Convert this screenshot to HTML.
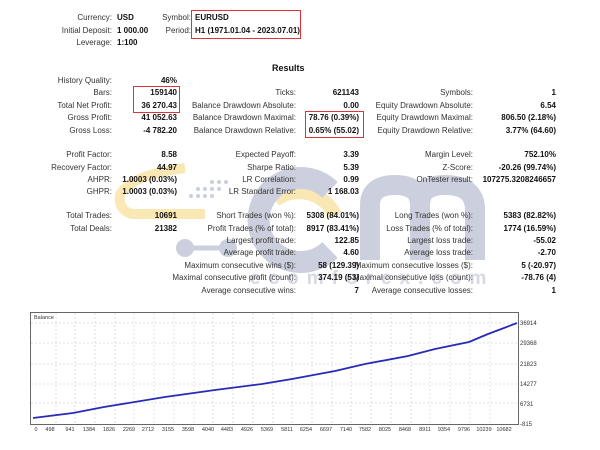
<!DOCTYPE html>
<html><head><meta charset="utf-8"><style>
body{margin:0;width:600px;height:450px;background:#fff;position:relative;overflow:hidden;font-family:"Liberation Sans",Tahoma,sans-serif;font-size:8px;color:#222}
.l,.v,.t{position:absolute;white-space:nowrap;line-height:10px}
.l{text-align:right;color:#333}
.v{text-align:right;font-weight:bold;color:#111}
.t{font-weight:bold;color:#111}
.box{position:absolute;border:1.5px solid #e0323a}
svg{position:absolute;left:0;top:0}
</style></head><body>
<svg width="600" height="450" style="z-index:0">
 <g opacity="0.5">
  <path d="M185 168 Q130 175 120 195 Q118 210 132 214 L205 214" fill="none" stroke="#f7d26b" stroke-width="10"/>
  <path d="M275 200 A40 40 0 0 1 335 215" fill="none" stroke="#f7d26b" stroke-width="14"/>
  <path d="M330 190 A42 42 0 1 0 330 250" fill="none" stroke="#9aa0bc" stroke-width="22"/>
  <path d="M370 260 L370 205 Q370 185 395 185 Q420 185 420 205 L420 260 M420 205 Q420 185 445 185 Q475 185 475 210 L475 260" fill="none" stroke="#9aa0bc" stroke-width="20"/>
  <line x1="185" y1="248" x2="228" y2="248" stroke="#9aa0bc" stroke-width="5"/>
  <circle cx="185" cy="248" r="9" fill="#9aa0bc"/><circle cx="228" cy="248" r="9" fill="#9aa0bc"/>
  <g fill="#9aa0bc"><circle cx="212" cy="182" r="2"/><circle cx="219" cy="182" r="2"/><circle cx="226" cy="182" r="2"/><circle cx="198" cy="189" r="2"/><circle cx="205" cy="189" r="2"/><circle cx="212" cy="189" r="2"/><circle cx="219" cy="189" r="2"/><circle cx="191" cy="196" r="2"/><circle cx="198" cy="196" r="2"/><circle cx="205" cy="196" r="2"/><circle cx="212" cy="196" r="2"/></g>
  <text x="250" y="284" font-family="Liberation Sans" font-size="19" font-weight="bold" fill="#9aa0bc" opacity="0.8" letter-spacing="8">ecomforex.com</text>
 </g>
</svg>
<div style="position:relative;z-index:1">
<div class="l" style="right:488px;top:13px">Currency:</div><div class="t" style="left:117px;top:13px">USD</div>
<div class="l" style="right:488px;top:26px">Initial Deposit:</div><div class="t" style="left:117px;top:26px">1 000.00</div>
<div class="l" style="right:488px;top:38px">Leverage:</div><div class="t" style="left:117px;top:38px">1:100</div>
<div class="l" style="right:409px;top:13px">Symbol:</div><div class="t" style="left:195px;top:13px">EURUSD</div>
<div class="l" style="right:409px;top:26px">Period:</div><div class="t" style="left:195px;top:26px">H1 (1971.01.04 - 2023.07.01)</div>
<div class="t" style="left:272px;top:63px;font-size:9px">Results</div>

<div class="l" style="right:488px;top:76px">History Quality:</div><div class="v" style="right:423px;top:76px">46%</div>
<div class="l" style="right:488px;top:88px">Bars:</div><div class="v" style="right:423px;top:88px">159140</div>
<div class="l" style="right:488px;top:101px">Total Net Profit:</div><div class="v" style="right:423px;top:101px">36 270.43</div>
<div class="l" style="right:488px;top:113px">Gross Profit:</div><div class="v" style="right:423px;top:113px">41 052.63</div>
<div class="l" style="right:488px;top:126px">Gross Loss:</div><div class="v" style="right:423px;top:126px">-4 782.20</div>

<div class="l" style="right:304px;top:88px">Ticks:</div><div class="v" style="right:241px;top:88px">621143</div>
<div class="l" style="right:304px;top:101px">Balance Drawdown Absolute:</div><div class="v" style="right:241px;top:101px">0.00</div>
<div class="l" style="right:304px;top:113px">Balance Drawdown Maximal:</div><div class="v" style="right:241px;top:113px">78.76 (0.39%)</div>
<div class="l" style="right:304px;top:126px">Balance Drawdown Relative:</div><div class="v" style="right:241px;top:126px">0.65% (55.02)</div>

<div class="l" style="right:127px;top:88px">Symbols:</div><div class="v" style="right:44px;top:88px">1</div>
<div class="l" style="right:127px;top:101px">Equity Drawdown Absolute:</div><div class="v" style="right:44px;top:101px">6.54</div>
<div class="l" style="right:127px;top:113px">Equity Drawdown Maximal:</div><div class="v" style="right:44px;top:113px">806.50 (2.18%)</div>
<div class="l" style="right:127px;top:126px">Equity Drawdown Relative:</div><div class="v" style="right:44px;top:126px">3.77% (64.60)</div>

<div class="l" style="right:488px;top:150px">Profit Factor:</div><div class="v" style="right:423px;top:150px">8.58</div>
<div class="l" style="right:488px;top:163px">Recovery Factor:</div><div class="v" style="right:423px;top:163px">44.97</div>
<div class="l" style="right:488px;top:175px">AHPR:</div><div class="v" style="right:423px;top:175px">1.0003 (0.03%)</div>
<div class="l" style="right:488px;top:187px">GHPR:</div><div class="v" style="right:423px;top:187px">1.0003 (0.03%)</div>
<div class="l" style="right:304px;top:150px">Expected Payoff:</div><div class="v" style="right:241px;top:150px">3.39</div>
<div class="l" style="right:304px;top:163px">Sharpe Ratio:</div><div class="v" style="right:241px;top:163px">5.39</div>
<div class="l" style="right:304px;top:175px">LR Correlation:</div><div class="v" style="right:241px;top:175px">0.99</div>
<div class="l" style="right:304px;top:187px">LR Standard Error:</div><div class="v" style="right:241px;top:187px">1 168.03</div>
<div class="l" style="right:127px;top:150px">Margin Level:</div><div class="v" style="right:44px;top:150px">752.10%</div>
<div class="l" style="right:127px;top:163px">Z-Score:</div><div class="v" style="right:44px;top:163px">-20.26 (99.74%)</div>
<div class="l" style="right:127px;top:175px">OnTester result:</div><div class="v" style="right:44px;top:175px">107275.3208246657</div>

<div class="l" style="right:488px;top:211px">Total Trades:</div><div class="v" style="right:423px;top:211px">10691</div>
<div class="l" style="right:488px;top:224px">Total Deals:</div><div class="v" style="right:423px;top:224px">21382</div>
<div class="l" style="right:304px;top:211px">Short Trades (won %):</div><div class="v" style="right:241px;top:211px">5308 (84.01%)</div>
<div class="l" style="right:304px;top:224px">Profit Trades (% of total):</div><div class="v" style="right:241px;top:224px">8917 (83.41%)</div>
<div class="l" style="right:304px;top:236px">Largest profit trade:</div><div class="v" style="right:241px;top:236px">122.85</div>
<div class="l" style="right:304px;top:248px">Average profit trade:</div><div class="v" style="right:241px;top:248px">4.60</div>
<div class="l" style="right:304px;top:261px">Maximum consecutive wins ($):</div><div class="v" style="right:241px;top:261px">58 (129.39)</div>
<div class="l" style="right:304px;top:273px">Maximal consecutive profit (count):</div><div class="v" style="right:241px;top:273px">374.19 (53)</div>
<div class="l" style="right:304px;top:286px">Average consecutive wins:</div><div class="v" style="right:241px;top:286px">7</div>
<div class="l" style="right:127px;top:211px">Long Trades (won %):</div><div class="v" style="right:44px;top:211px">5383 (82.82%)</div>
<div class="l" style="right:127px;top:224px">Loss Trades (% of total):</div><div class="v" style="right:44px;top:224px">1774 (16.59%)</div>
<div class="l" style="right:127px;top:236px">Largest loss trade:</div><div class="v" style="right:44px;top:236px">-55.02</div>
<div class="l" style="right:127px;top:248px">Average loss trade:</div><div class="v" style="right:44px;top:248px">-2.70</div>
<div class="l" style="right:127px;top:261px">Maximum consecutive losses ($):</div><div class="v" style="right:44px;top:261px">5 (-20.97)</div>
<div class="l" style="right:127px;top:273px">Maximal consecutive loss (count):</div><div class="v" style="right:44px;top:273px">-78.76 (4)</div>
<div class="l" style="right:127px;top:286px">Average consecutive losses:</div><div class="v" style="right:44px;top:286px">1</div>

<div class="box" style="left:191px;top:10px;width:108px;height:27px"></div>
<div class="box" style="left:133px;top:86px;width:45px;height:25px"></div>
<div class="box" style="left:305px;top:111px;width:57px;height:25px"></div>
</div>

<svg width="600" height="450" style="z-index:2" font-family="Liberation Sans" font-size="6" fill="#333">
 <rect x="30.5" y="312.5" width="488" height="112" fill="#fff" stroke="#666"/>
 <g stroke="#d6d6d6" stroke-dasharray="2,2" stroke-width="0.7">
  <line x1="31" x2="518" y1="323" y2="323"/><line x1="31" x2="518" y1="343" y2="343"/><line x1="31" x2="518" y1="364" y2="364"/><line x1="31" x2="518" y1="384" y2="384"/><line x1="31" x2="518" y1="403" y2="403"/>
  <line x1="56" x2="56" y1="313" y2="424"/><line x1="75" x2="75" y1="313" y2="424"/><line x1="95" x2="95" y1="313" y2="424"/><line x1="115" x2="115" y1="313" y2="424"/><line x1="134" x2="134" y1="313" y2="424"/><line x1="154" x2="154" y1="313" y2="424"/><line x1="174" x2="174" y1="313" y2="424"/><line x1="194" x2="194" y1="313" y2="424"/><line x1="213" x2="213" y1="313" y2="424"/><line x1="233" x2="233" y1="313" y2="424"/><line x1="253" x2="253" y1="313" y2="424"/><line x1="273" x2="273" y1="313" y2="424"/><line x1="292" x2="292" y1="313" y2="424"/><line x1="312" x2="312" y1="313" y2="424"/><line x1="332" x2="332" y1="313" y2="424"/><line x1="351" x2="351" y1="313" y2="424"/><line x1="371" x2="371" y1="313" y2="424"/><line x1="391" x2="391" y1="313" y2="424"/><line x1="411" x2="411" y1="313" y2="424"/><line x1="430" x2="430" y1="313" y2="424"/><line x1="450" x2="450" y1="313" y2="424"/><line x1="470" x2="470" y1="313" y2="424"/><line x1="490" x2="490" y1="313" y2="424"/>
 </g>
 <polyline fill="none" stroke="#2a2ab8" stroke-width="1.8" points="33,418 73,413 104,407 165,397 215,390 262,384 292,379 335,371 365,364 408,356 435,349 469,342 488,334 504,328 517,323"/>
 <text x="34" y="319" font-size="5.5">Balance</text>
 <g text-anchor="start"><text x="520" y="325">36914</text><text x="520" y="345">29368</text><text x="520" y="366">21823</text><text x="520" y="386">14277</text><text x="520" y="406">6731</text><text x="520" y="426">-815</text></g>
 <g text-anchor="middle" font-size="5.5"><text x="36" y="431">0</text><text x="50" y="431">498</text><text x="70" y="431">941</text><text x="89" y="431">1384</text><text x="109" y="431">1826</text><text x="129" y="431">2269</text><text x="148" y="431">2712</text><text x="168" y="431">3155</text><text x="188" y="431">3598</text><text x="208" y="431">4040</text><text x="227" y="431">4483</text><text x="247" y="431">4926</text><text x="267" y="431">5369</text><text x="287" y="431">5811</text><text x="306" y="431">6254</text><text x="326" y="431">6697</text><text x="346" y="431">7140</text><text x="365" y="431">7582</text><text x="385" y="431">8025</text><text x="405" y="431">8468</text><text x="425" y="431">8911</text><text x="444" y="431">9354</text><text x="464" y="431">9796</text><text x="484" y="431">10239</text><text x="504" y="431">10682</text></g>
</svg>
</body></html>
